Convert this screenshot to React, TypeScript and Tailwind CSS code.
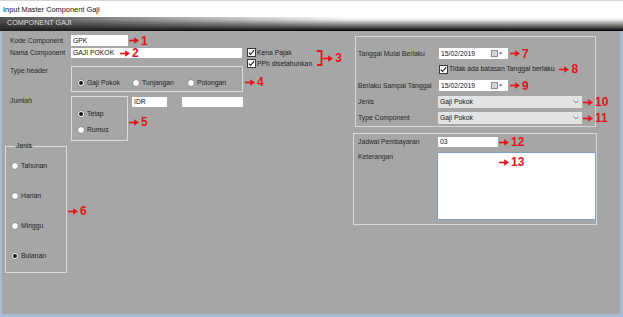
import React from 'react';

const RED = 'text-[#e5141a]';

const Note: React.FC<{ n: string; className?: string }> = ({ n, className = '' }) => (
  <span className={`flex h-[12px] items-center gap-[2px] ${className}`}>
    <svg width="10" height="7" viewBox="0 0 10 7">
      <path d="M0 2.7h6v1.6H0z" fill="#e5141a" />
      <path d="M5.2 0.3L10 3.5 5.2 6.7z" fill="#e5141a" />
    </svg>
    <span className={`text-[12px] font-bold leading-[12px] ${RED}`}>{n}</span>
  </span>
);

const Radio: React.FC<{ label: string; checked?: boolean; className?: string }> = ({ label, checked, className = '' }) => (
  <span className={`flex h-[8px] items-center ${className}`}>
    <span className="flex h-[8px] w-[8px] shrink-0 items-center justify-center rounded-full border border-[#8a8a8a] bg-white">
      {checked && <span className="h-[4px] w-[4px] rounded-full bg-[#111]" />}
    </span>
    <span className="ml-[2px] text-[6.8px] leading-[8px] text-[#1e1e1e]">{label}</span>
  </span>
);

const Check: React.FC<{ label: string; className?: string }> = ({ label, className = '' }) => (
  <span className={`flex h-[9px] items-center ${className}`}>
    <span className="flex h-[9px] w-[9px] shrink-0 items-center justify-center border border-[#3a3a3a] bg-white">
      <svg width="7" height="7" viewBox="0 0 7 7">
        <path d="M0.8 3.6l1.8 1.8L6.2 1.2" fill="none" stroke="#222" strokeWidth="1.1" />
      </svg>
    </span>
    <span className="ml-[1px] text-[6.8px] leading-[8px] text-[#1e1e1e]">{label}</span>
  </span>
);

const Label: React.FC<{ children: React.ReactNode; className?: string }> = ({ children, className = '' }) => (
  <span className={`shrink-0 text-[6.8px] leading-[8px] text-[#262626] ${className}`}>{children}</span>
);

const Field: React.FC<{ value?: string; className?: string; children?: React.ReactNode }> = ({ value, className = '', children }) => (
  <span className={`relative flex shrink-0 items-center bg-white pl-[2px] text-[6.8px] leading-[8px] text-[#111] ${className}`}>
    {value}
    {children}
  </span>
);

const DateField: React.FC = () => (
  <Field value="15/02/2019" className="h-[11px] w-[69px]">
    <svg className="absolute right-[5px] top-[2px]" width="12" height="7" viewBox="0 0 12 7">
      <rect x="0.5" y="0.5" width="6" height="6" fill="#d6d6d6" stroke="#8c8c8c" />
      <path d="M8 2.5h3.4L9.7 4.6z" fill="#555" />
    </svg>
  </Field>
);

const Select: React.FC<{ value: string }> = ({ value }) => (
  <span className="relative flex h-[12px] w-[144px] shrink-0 items-center bg-[#e3e3e3] pl-[2px] text-[6.8px] leading-[8px] text-[#111]">
    {value}
    <svg className="absolute right-[3px] top-[4px]" width="6" height="4" viewBox="0 0 6 4">
      <path d="M0.5 0.5L3 3l2.5-2.5" fill="none" stroke="#777" strokeWidth="0.9" />
    </svg>
  </span>
);

export default function App() {
  return (
    <div className="flex h-[317px] w-[623px] flex-col overflow-hidden font-[family-name:'Liberation_Sans',Arial,sans-serif]">
      <div className="flex h-[17px] items-center border-t border-[#cfd6e0] bg-white pl-[3px] text-[7.4px] leading-[9px] text-[#111]">
        Input Master Component Gaji
      </div>
      <div className="h-[14px] bg-[linear-gradient(to_right,rgba(40,40,40,0.8),rgba(40,40,40,0.35)_30%,rgba(40,40,40,0)_55%),linear-gradient(to_bottom,#ffffff,#e8e8e8_20%,#6a6a6a_65%,#000)] pl-[7px] pt-[2px] text-[7.2px] leading-[8px] text-[#dcdcdc]">
        COMPONENT GAJI
      </div>

      <div className="flex flex-1 border-b-[3px] border-l-[2px] border-r-[3px] border-[#a9bcd5] bg-[#a6a6a6]">
        {/* left side */}
        <div className="flex w-[351px] shrink-0 flex-col pl-[8px] pt-[4px]">
          <div className="flex h-[11px] items-center">
            <Label className="w-[61px]">Kode Component</Label>
            <Field value="GPK" className="h-[11px] w-[57px]" />
            <Note n="1" className="ml-[1px]" />
          </div>

          <div className="mt-[2px] flex h-[10px] items-start">
            <Label className="w-[61px] pt-[1px]">Nama Component</Label>
            <Field value="GAJI POKOK" className="h-[10px] w-[171px]">
              <Note n="2" className="absolute left-[49px] top-[-1px]" />
            </Field>
            <div className="ml-[5px] flex flex-col gap-[2px]">
              <Check label="Kena Pajak" />
              <Check label="PPh disetahunkan" />
            </div>
            <div className="ml-[5px] mt-[2px] flex items-center">
              <svg width="6" height="16" viewBox="0 0 6 16">
                <path d="M0 1h4.5v14H0" fill="none" stroke="#e5141a" strokeWidth="1.8" />
              </svg>
              <Note n="3" />
            </div>
          </div>

          <div className="mt-[8px] flex items-start">
            <Label className="w-[61px] pt-[1px]">Type header</Label>
            <div className="flex h-[26px] w-[172px] border border-[#dadada] pl-[5px] pt-[12px]">
              <Radio label="Gaji Pokok" checked className="w-[55px]" />
              <Radio label="Tunjangan" className="w-[55px]" />
              <Radio label="Potongan" className="w-[55px]" />
            </div>
            <Note n="4" className="ml-[2px] mt-[10px]" />
          </div>

          <div className="mt-[4px] flex items-start">
            <Label className="w-[61px] pt-[1px]">Jumlah</Label>
            <div className="flex h-[45px] w-[57px] flex-col gap-[8px] border border-[#dadada] pl-[5px] pt-[13px]">
              <Radio label="Tetap" checked />
              <Radio label="Rumus" />
            </div>
            <div className="ml-[4px] flex flex-col">
              <div className="mt-[1px] flex">
                <Field value="IDR" className="h-[10px] w-[35px]" />
                <Field className="ml-[15px] h-[10px] w-[61px]" />
              </div>
              <Note n="5" className="ml-[-3px] mt-[9px]" />
            </div>
          </div>

          <div className="mt-[1px] flex items-start">
            <fieldset className="ml-[-5px] flex w-[62px] flex-col gap-[22px] border border-[#dadada] pb-[12px] pl-[5px] pt-[12px]">
              <legend className="ml-[4px] px-[1px] text-[6.8px] leading-[8px] text-[#222]">Jenis</legend>
              <Radio label="Tahunan" />
              <Radio label="Harian" />
              <Radio label="Minggu" />
              <Radio label="Bulanan" checked />
            </fieldset>
            <Note n="6" className="ml-[1px] mt-[63px]" />
          </div>
        </div>

        {/* right side */}
        <div className="flex flex-col">
          <div className="ml-[2px] mt-[5px] flex w-[241px] flex-col border border-[#d8d8d8] pb-[2px] pl-[2px] pt-[11px]">
            <div className="flex h-[11px] items-center">
              <Label className="w-[81px]">Tanggal Mulai Berlaku</Label>
              <DateField />
              <Note n="7" className="ml-[2px]" />
            </div>
            <div className="mt-[4px] flex items-center pl-[81px]">
              <Check label="Tidak ada batasan Tanggal berlaku" />
              <Note n="8" className="ml-[5px]" />
            </div>
            <div className="mt-[5px] flex h-[11px] items-center">
              <Label className="w-[81px]">Berlaku Sampai Tanggal</Label>
              <DateField />
              <Note n="9" className="ml-[2px]" />
            </div>
            <div className="mt-[5px] flex items-center">
              <Label className="w-[80px]">Jenis</Label>
              <Select value="Gaji Pokok" />
              <Note n="10" className="ml-[1px]" />
            </div>
            <div className="mt-[4px] flex items-center">
              <Label className="w-[80px]">Type Component</Label>
              <Select value="Gaji Pokok" />
              <Note n="11" className="ml-[1px]" />
            </div>
          </div>

          <div className="mt-[6px] flex w-[244px] flex-col border border-[#d8d8d8] pb-[4px] pl-[4px] pt-[3px]">
            <div className="flex h-[10px] items-center">
              <Label className="w-[80px]">Jadwal Pembayaran</Label>
              <Field value="03" className="h-[10px] w-[60px]" />
              <Note n="12" className="ml-[1px]" />
            </div>
            <div className="mt-[5px] flex items-start">
              <Label className="w-[79px] pt-[1px]">Keterangan</Label>
              <div className="relative h-[68px] w-[159px] border border-[#7f9dbd] bg-white">
                <Note n="13" className="absolute left-[61px] top-[3px]" />
              </div>
            </div>
          </div>
        </div>
      </div>
    </div>
  );
}
